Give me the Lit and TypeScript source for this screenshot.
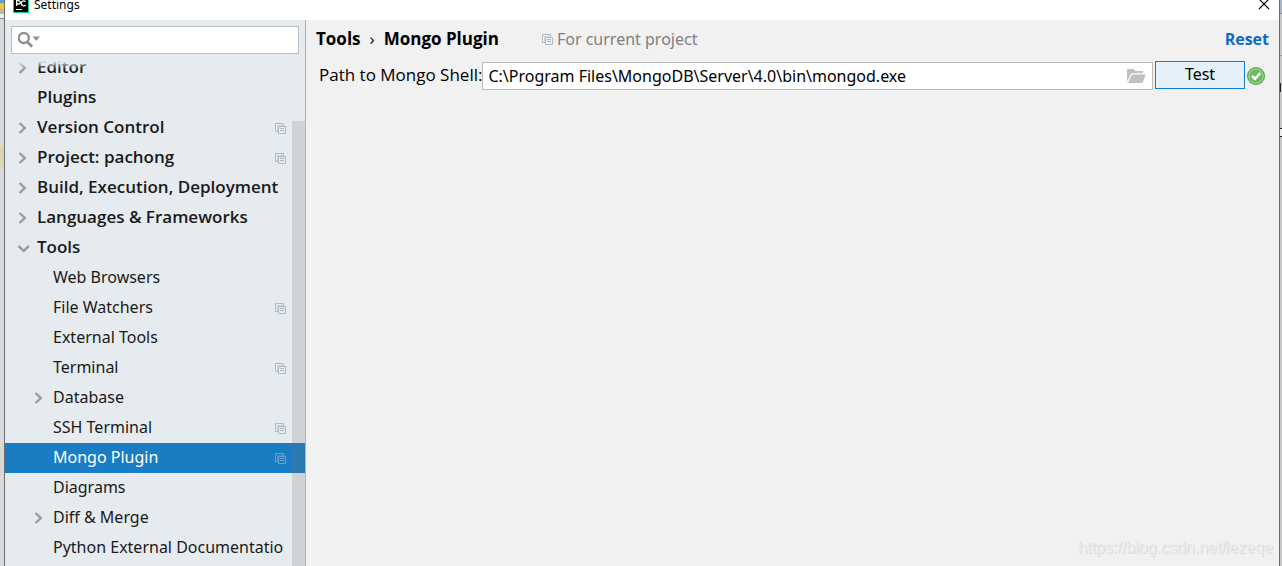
import { LitElement, html, css, svg, nothing } from "lit";
import { customElement, property } from "lit/decorators.js";

interface TreeItem {
  label: string;
  level: 0 | 1;
  arrow?: "right" | "down";
  project?: boolean;
  selected?: boolean;
}

const ITEMS: TreeItem[] = [
  { label: "Editor", level: 0, arrow: "right" },
  { label: "Plugins", level: 0 },
  { label: "Version Control", level: 0, arrow: "right", project: true },
  { label: "Project: pachong", level: 0, arrow: "right", project: true },
  { label: "Build, Execution, Deployment", level: 0, arrow: "right" },
  { label: "Languages & Frameworks", level: 0, arrow: "right" },
  { label: "Tools", level: 0, arrow: "down" },
  { label: "Web Browsers", level: 1 },
  { label: "File Watchers", level: 1, project: true },
  { label: "External Tools", level: 1 },
  { label: "Terminal", level: 1, project: true },
  { label: "Database", level: 1, arrow: "right" },
  { label: "SSH Terminal", level: 1, project: true },
  { label: "Mongo Plugin", level: 1, project: true, selected: true },
  { label: "Diagrams", level: 1 },
  { label: "Diff & Merge", level: 1, arrow: "right" },
  { label: "Python External Documentatio", level: 1 },
];

const projectIcon = html`<svg class="project-icon" width="11" height="11" viewBox="0 0 11 11" fill="none" stroke="currentColor" aria-hidden="true">
  <path d="M3 8.5H.5V.5H8.5V3" />
  <path d="M3.5 3.5H10.5V10.5H3.5Z" />
  <path d="M2 2.5H8M2.5 3V8" opacity=".5" />
  <path d="M5 5.5H9M5 7.5H9" />
</svg>`;

@customElement("settings-tree")
export class SettingsTree extends LitElement {
  @property({ attribute: false }) items: TreeItem[] = [];

  static styles = css`
    :host { display: block; position: relative; overflow: hidden; }
    .list { list-style: none; margin: -8px 0 0; padding: 0; }
    .row {
      display: flex; align-items: center; height: 30px;
      padding: 0 19px 0 12px; box-sizing: border-box; color: #1a1a1a;
    }
    .row.child { padding-left: 28px; font: 16px/24px "Noto Sans", sans-serif; }
    .row.selected { background: #1a7dc4; color: #fff; }
    .arrow { flex: none; width: 20px; height: 12px; color: #999c9f; }
    .label { flex: 1; min-width: 0; white-space: nowrap; line-height: 28px; height: 30px; }
    .top .label { font-weight: 600; }
    .project-icon { flex: none; color: #b1bac0; }
    .selected .project-icon { color: #6f9fc4; }
    .fade {
      position: absolute; top: 0; left: 0; right: 0; height: 8px;
      background: linear-gradient(#e6ebf0, #e6ebf000);
    }
    .thumb {
      position: absolute; top: 60px; right: 0; bottom: 0; width: 13px;
      background: rgba(115, 115, 115, 0.2);
    }
  `;

  private arrow(kind?: "right" | "down") {
    return html`<svg class="arrow" viewBox="0 0 20 12" fill="none" stroke="currentColor" stroke-width="2.4" aria-hidden="true">
      ${kind === "right" ? svg`<path d="M2.5 1L7.8 6L2.5 11" />` : nothing}
      ${kind === "down" ? svg`<path d="M1.5 4L6.7 8.8L11.9 4" />` : nothing}
    </svg>`;
  }

  render() {
    return html`
      <ul class="list">
        ${this.items.map(
          (i) => html`<li class="row ${i.level ? "child" : "top"} ${i.selected ? "selected" : ""}">
            ${this.arrow(i.arrow)}<span class="label">${i.label}</span>${i.project ? projectIcon : nothing}
          </li>`
        )}
      </ul>
      <div class="fade"></div>
      <div class="thumb"></div>
    `;
  }
}

@customElement("app-root")
export class AppRoot extends LitElement {
  static styles = css`
    :host {
      display: grid; grid-template-columns: 4px minmax(0, 1fr) 2px;
      height: 100vh; overflow: hidden; background: #d9d9d9;
      font: 17px/24px "Open Sans", "Noto Sans", sans-serif; color: #000;
    }
    .behind { display: flex; flex-direction: column; overflow: hidden; }
    .behind-tab { height: 14px; background: linear-gradient(#5d9dc9 0 3px, #f3c53c 3px 9px, #b9b9a8 9px); }
    .behind-line { height: 4px; background: #f0f0f0; border-bottom: 1px solid #8d8d8d; }
    .behind-mark { height: 21px; margin-top: 127px; background: #dcd6ae; }
    .behind-right { background: #c6c8ca; }
    .behind-top { height: 13px; background: #a9b7c4; border-bottom: 1px solid #8d8d8d; }
    .behind-mid { height: 41px; border-bottom: 1px solid #999; }
    .behind-glyph { height: 9px; margin-top: 27px; width: 2px; border-left: 1px solid #222; }
    .behind-box { height: 7px; margin-top: 36px; border: solid #222; border-width: 1px 0; background: #eee; }
    .window {
      display: flex; flex-direction: column; min-height: 0; background: #f1f1f1;
      border: solid #6b6e70; border-width: 0 1px;
    }
    .titlebar {
      display: flex; flex: none; align-items: flex-end; height: 20px; padding: 0 9px 7px 8px;
      box-sizing: border-box; background: #fff; overflow: hidden;
    }
    .title { flex: 1; margin-left: 5px; font: 12px/16px "Noto Sans", sans-serif; }
    .close { display: flex; padding: 0; border: 0; background: none; }
    .body { display: grid; grid-template-columns: 301px minmax(0, 1fr); flex: 1; min-height: 0; }
    .sidebar {
      display: flex; flex-direction: column; min-height: 0;
      background: #e6ebf0; border-right: 1px solid #b0b4b7;
    }
    .search {
      display: flex; align-items: center; flex: none; height: 28px; margin: 6px 6px 7px;
      padding: 0 6px; box-sizing: border-box; background: #fff; border: 1px solid #b9bdc0;
    }
    .search-input { flex: 1; min-width: 0; border: 0; outline: 0; padding: 0 4px; font: inherit; background: none; }
    .tree { flex: 1; min-height: 0; }
    .content { display: flex; flex-direction: column; min-width: 0; padding: 0 10px; }
    .header { display: flex; align-items: center; height: 38px; }
    .crumbs { display: flex; gap: 9px; margin: 0; font-size: 17px; font-weight: 700; }
    .sep { font-weight: 500; }
    .scope {
      display: flex; align-items: center; flex: 1; gap: 4px; margin-left: 43px;
      color: #808080; font: 16px/24px "Noto Sans", sans-serif;
    }
    .project-icon { color: #b1bac0; }
    .reset { color: #0b6cc4; font-size: 16px; font-weight: 700; text-decoration: none; }
    .form { display: flex; align-items: flex-start; padding: 3px 4px 0 3px; }
    .form-label { line-height: 28px; }
    .path {
      display: flex; align-items: center; flex: 1; min-width: 0; height: 28px; margin: 1px 2px 0 0;
      padding: 0 6px 0 5px; box-sizing: border-box; background: #fff; border: 1px solid #bcbcbc;
    }
    .path-input {
      flex: 1; min-width: 0; padding: 0; border: 0; outline: 0; color: #000; background: none;
      font: 16px/24px "Noto Sans", sans-serif;
    }
    .browse { display: flex; padding: 0; border: 0; background: none; }
    .test {
      width: 90px; height: 28px; margin-right: 2px; padding: 0 0 2px; box-sizing: border-box;
      border: 1px solid #0f7fd9; background: #e4f0fa; color: #000;
      font: 16px/24px "Noto Sans", sans-serif;
    }
    .status { align-self: center; }
    .watermark {
      position: absolute; right: 9px; bottom: 6px; color: #ececec;
      font: 16px/24px "Liberation Sans", sans-serif; text-shadow: 1px 1px 0 #dadada;
    }
  `;

  render() {
    return html`
      <div class="behind">
        <div class="behind-tab"></div>
        <div class="behind-line"></div>
        <div class="behind-mark"></div>
      </div>
      <main class="window">
        <header class="titlebar">
          <svg width="16" height="16" viewBox="0 0 16 16" aria-hidden="true">
            <rect width="16" height="16" fill="#21d789" />
            <rect x="1" y="0" width="14" height="15" fill="#000" />
            <path d="M3.6 9V3.7H5.6A1.6 1.6 0 0 1 5.6 7H3.6M12.6 4.6A2.5 2.5 0 1 0 12.6 8" fill="none" stroke="#fff" stroke-width="1.3" />
            <rect x="3" y="12" width="6" height="1" fill="#fff" />
          </svg>
          <span class="title">Settings</span>
          <button class="close" aria-label="Close">
            <svg width="12" height="14" viewBox="0 0 12 14" stroke="#000" stroke-width="1.1" fill="none">
              <path d="M1 0L11 10M11 0L1 10" />
            </svg>
          </button>
        </header>
        <div class="body">
          <nav class="sidebar">
            <label class="search">
              <svg width="23" height="18" viewBox="0 0 23 18" fill="none" aria-hidden="true">
                <circle cx="5.8" cy="7" r="5" stroke="#8f9294" stroke-width="2.4" />
                <path d="M9.3 10.8L14.1 15.8" stroke="#8f9294" stroke-width="2.8" />
                <path d="M14.5 5.5H22L18.3 9.8Z" fill="#8f9294" />
              </svg>
              <input class="search-input" type="text" aria-label="Search settings" />
            </label>
            <settings-tree class="tree" .items=${ITEMS}></settings-tree>
          </nav>
          <section class="content">
            <div class="header">
              <h1 class="crumbs"><span>Tools</span><span class="sep">›</span><span>Mongo Plugin</span></h1>
              <div class="scope">${projectIcon}<span>For current project</span></div>
              <a class="reset" href="#">Reset</a>
            </div>
            <form class="form">
              <label class="form-label" for="path">Path to Mongo Shell:</label>
              <div class="path">
                <input class="path-input" id="path" type="text" value="C:\\Program Files\\MongoDB\\Server\\4.0\\bin\\mongod.exe" />
                <button class="browse" type="button" aria-label="Browse">
                  <svg width="19" height="14" viewBox="0 0 19 14" fill="#bcc2c6">
                    <path d="M0 0H6.5L8.5 2H16V4.2H4.4L0 12.5Z" />
                    <path d="M5 5.4H19L15.4 14H.8Z" />
                  </svg>
                </button>
              </div>
              <button class="test" type="button">Test</button>
              <svg class="status" width="18" height="18" viewBox="0 0 18 18" role="img" aria-label="Success">
                <circle cx="9" cy="9" r="9" fill="#4da346" />
                <circle cx="9" cy="9" r="7.2" fill="#6cba60" stroke="#a5da96" stroke-width="1.2" />
                <path d="M5 8.8L8 11.8L13.2 6" fill="none" stroke="#fff" stroke-width="2.6" />
              </svg>
            </form>
          </section>
        </div>
      </main>
      <div class="behind behind-right">
        <div class="behind-top"></div>
        <div class="behind-mid"></div>
        <div class="behind-glyph"></div>
        <div class="behind-box"></div>
      </div>
      <div class="watermark">https://blog.csdn.net/lezeqe</div>
    `;
  }
}
